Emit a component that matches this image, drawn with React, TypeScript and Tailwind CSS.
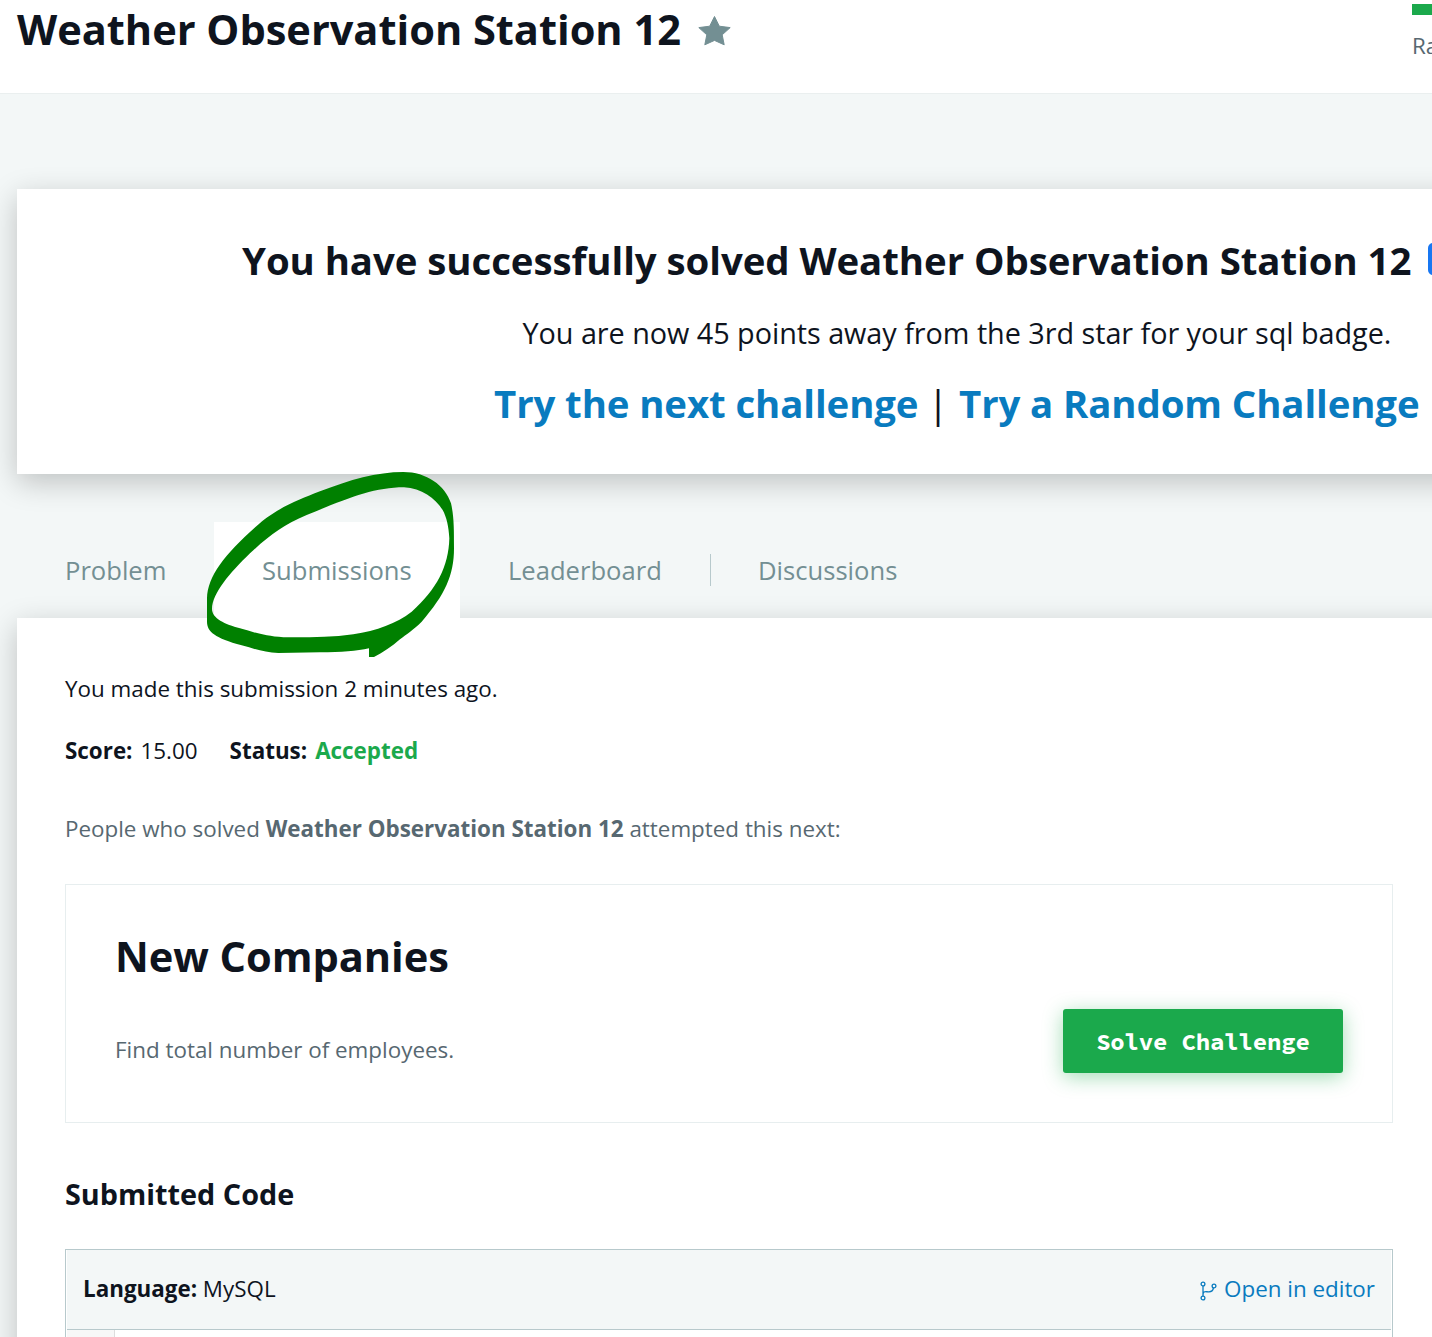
import React from "react";

function Header() {
  return (
    <header className="flex h-[94px] items-start border-b border-[#eaefef] bg-white pl-[17px]">
      <h1 className="h-[60px] w-[664px] text-[41.6px] leading-[58px] font-bold tracking-[-0.03px] whitespace-nowrap text-[#0e141e]">
        Weather Observation Station 12
      </h1>
      <svg className="mt-[15px] ml-[17px] h-8 w-[33px] shrink-0 fill-[#738f93]" viewBox="0 0 33 32">
        <path d="M16.5 1.5 L21.3 11.2 L32.2 12.6 L24.2 19.8 L26.2 29.8 L16.5 25.4 L6.8 29.8 L8.8 19.8 L0.8 12.6 L11.7 11.2 Z" stroke="#738f93" strokeWidth="1" strokeLinejoin="round" />
      </svg>
      <div className="mt-1 ml-auto w-5 shrink-0 overflow-hidden">
        <div className="h-[11px] bg-[#1ba94c]" />
        <div className="mt-[15px] text-[22.4px] leading-8 text-[#576871]">Ra</div>
      </div>
    </header>
  );
}

function Banner() {
  return (
    <section className="mt-[95px] h-[285px] w-[1879px] bg-white pt-[42px] whitespace-nowrap text-[#0e141e] shadow-[0_8px_28px_rgba(0,0,0,0.22)]">
      <div className="flex h-[60px] items-start pl-[225px]">
        <h2 className="w-[1170px] text-[38.4px] leading-[58px] font-bold tracking-[-0.06px]">
          You have successfully solved Weather Observation Station 12
        </h2>
        <span className="mt-[12px] ml-4 h-8 w-20 rounded-[5px] bg-[#1877f2]" />
      </div>
      <p className="mt-[22px] pl-[505.5px] text-[28.8px] leading-10 tracking-[-0.04px]">
        You are now 45 points away from the 3rd star for your sql badge.
      </p>
      <p className="mt-[20px] flex pl-[477px] text-[38.4px] leading-[60px] font-bold tracking-[-0.1px] text-[#097bbf]">
        <span className="w-[423px]">Try the next challenge</span>
        <span className="w-[42px] text-center font-normal text-[#0e141e]">|</span>
        <span>Try a Random Challenge</span>
      </p>
    </section>
  );
}

function Tabs() {
  return (
    <nav className="mt-12 flex h-24 items-start text-[25.6px] leading-[98px] text-[#738f93]">
      <div className="w-[197px] pl-12">Problem</div>
      <div className="relative z-10 h-24 w-[246px] bg-white pl-12">Submissions</div>
      <div className="w-[250px] pl-12">Leaderboard</div>
      <div className="mt-8 h-8 w-px bg-[#b7c9cc]" />
      <div className="pl-[47px]">Discussions</div>
    </nav>
  );
}

function Scribble() {
  return (
    <svg className="pointer-events-none absolute top-[460px] left-[190px] z-20 h-[210px] w-[290px]" viewBox="0 0 870 630">
      <path
        fill="#008000"
        fillRule="evenodd"
        d="M51 415 C53 345 110 275 217 183 C275 138 330 118 390 94 C480 59 560 36 640 36 C710 36 765 76 783 130 C792 170 792 205 792 265 C792 345 765 405 695 485 C670 510 650 522 630 538 C605 560 580 577 552 591 L537 591 L537 565 C500 573 455 577 390 577 L265 579 C225 578 195 567 155 556 C75 534 51 515 51 485 Z M66 447 C67 400 120 338 180 280 C240 224 280 195 350 165 C470 116 550 82 642 82 C695 84 735 115 758 150 C770 172 776 200 778 235 C776 320 740 388 665 455 C620 490 560 512 490 523 C420 533 350 532 280 532 C220 528 190 516 150 505 C105 493 66 475 66 447 Z"
      />
    </svg>
  );
}

function ForkIcon() {
  return (
    <svg className="mt-[3px] mr-[7px] h-5 w-[17px]" viewBox="0 0 17 20" fill="none" stroke="#097bbf" strokeWidth="1.3">
      <circle cx="3" cy="3" r="1.9" />
      <circle cx="3" cy="17" r="1.9" />
      <circle cx="14" cy="5" r="1.9" />
      <path d="M3 5 V15 M3 14.5 C3 9.5 5 10.9 9 10.8 C12 10.7 13 9.5 13.5 7" />
    </svg>
  );
}

function NextChallenge() {
  return (
    <div className="mt-[39px] flex h-[239px] justify-between border border-[#e7eeef] pt-[41px] pr-[49px] pl-[49px]">
      <div>
        <h3 className="text-[41.6px] leading-[60px] font-bold tracking-[-0.06px] text-[#0e141e]">New Companies</h3>
        <p className="mt-[48px] text-[22.4px] leading-8 text-[#576871]">Find total number of employees.</p>
      </div>
      <button className="mt-[83px] h-16 w-[280px] rounded-[3px] bg-[#1ba94c] pt-0.5 font-['Source_Code_Pro','DejaVu_Sans_Mono',monospace] text-[24px] font-bold tracking-[-0.15px] text-white shadow-[0_4px_20px_rgba(27,169,76,0.4)]">
        Solve Challenge
      </button>
    </div>
  );
}

function Submission() {
  return (
    <section className="h-[800px] w-[1879px] bg-white pt-[55px] pl-12 text-[22.4px] leading-8 whitespace-nowrap text-[#0e141e] shadow-[0_8px_28px_rgba(0,0,0,0.22)]">
      <div className="w-[1328px]">
        <p>You made this submission 2 minutes ago.</p>
        <div className="mt-[30px] flex">
          <b>Score:</b>
          <span className="ml-2">15.00</span>
          <b className="ml-8">Status:</b>
          <b className="ml-2 text-[#1ba94c]">Accepted</b>
        </div>
        <p className="mt-[46px] text-[#576871]">
          People who solved <b>Weather Observation Station 12</b> attempted this next:
        </p>
        <NextChallenge />
        <h4 className="mt-[51px] text-[28.8px] leading-10 font-bold">Submitted Code</h4>
        <div className="mt-[35px] border border-[#b7c9cc] px-px">
          <div className="flex h-20 items-center justify-between border-b border-[#b7c9cc] bg-[#f3f7f7] px-4 pb-px">
            <p>
              <b>Language:</b> MySQL
            </p>
            <div className="flex items-center text-[#097bbf]">
              <ForkIcon />
              Open in editor
            </div>
          </div>
          <div className="h-[60px] w-12 border-r border-[#ddd] bg-[#f7f7f7]" />
        </div>
      </div>
    </section>
  );
}

export default function App() {
  return (
    <div className="relative h-[1337px] w-[1432px] overflow-hidden bg-[#f3f7f7] font-['Open_Sans',sans-serif]">
      <Header />
      <main className="pl-[17px]">
        <Banner />
        <Tabs />
        <Submission />
      </main>
      <Scribble />
    </div>
  );
}
